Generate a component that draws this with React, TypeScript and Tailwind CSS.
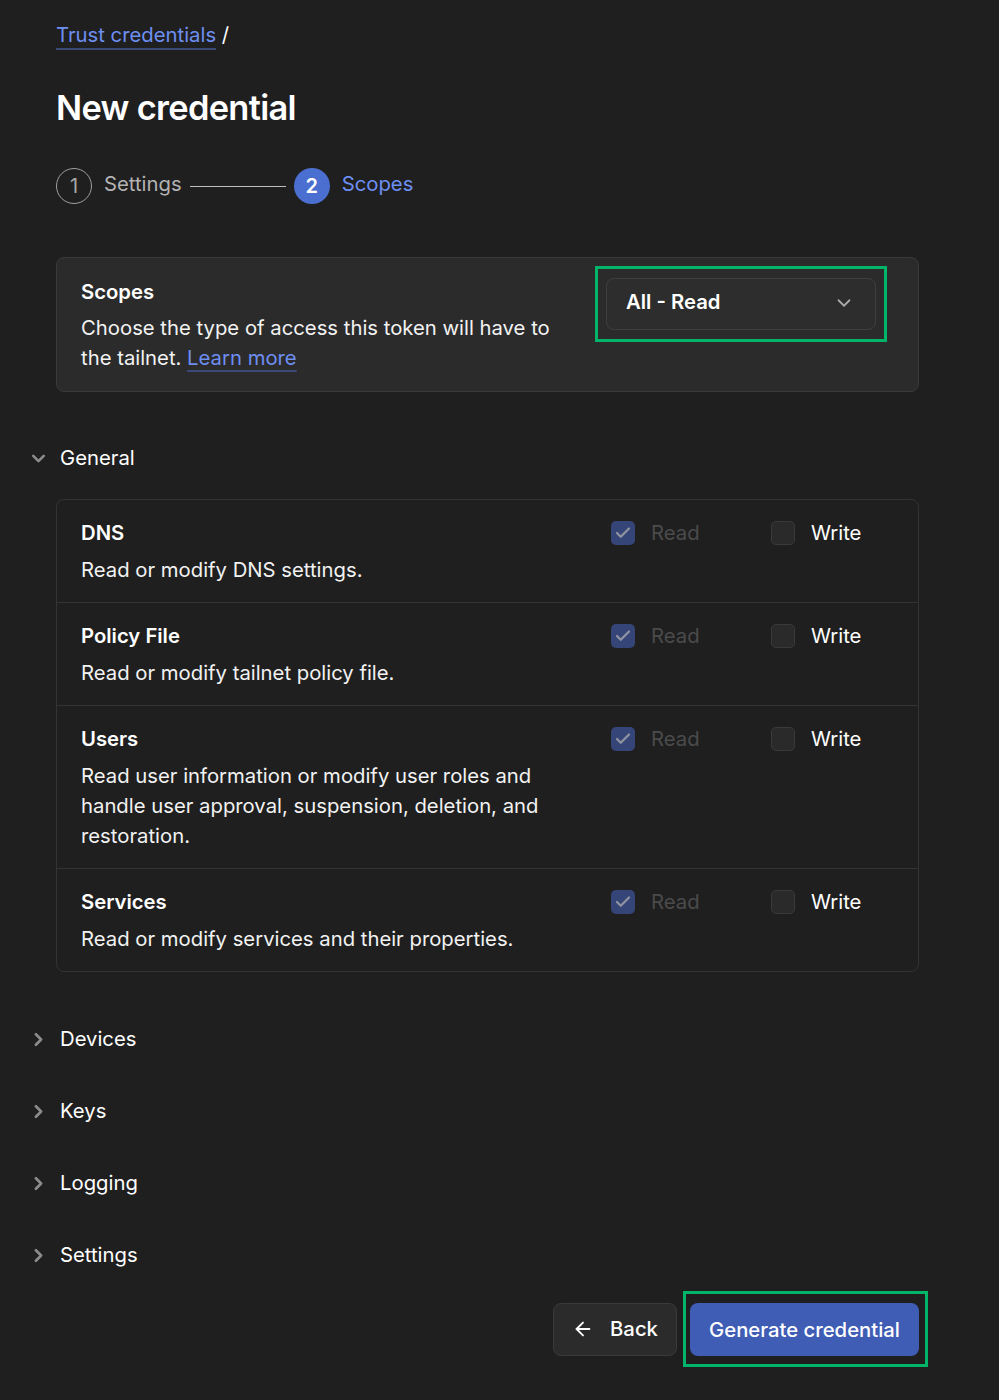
import { ArrowLeft, Check, ChevronDown, ChevronRight } from "lucide-react";

const scopes = [
  { title: "DNS", desc: "Read or modify DNS settings." },
  { title: "Policy File", desc: "Read or modify tailnet policy file." },
  {
    title: "Users",
    desc: "Read user information or modify user roles and handle user approval, suspension, deletion, and restoration.",
  },
  { title: "Services", desc: "Read or modify services and their properties." },
];

const collapsed = ["Devices", "Keys", "Logging", "Settings"];

function ScopeRow({ title, desc, last }: { title: string; desc: string; last?: boolean }) {
  return (
    <div className={`flex px-6 pt-[18px] pb-[17px] ${last ? "" : "border-b border-[#333333]"}`}>
      <div className="w-[470px]">
        <div className="font-semibold text-[20.3px] leading-[30px] text-white">{title}</div>
        <p className="mt-[7px] text-[20.3px] leading-[30px] text-[#f2f2f2]">{desc}</p>
      </div>
      <div className="ml-[60px] flex h-[30px] items-center">
        {/* Read - checked & disabled */}
        <div className="flex w-[160px] items-center gap-4">
          <span className="flex h-6 w-6 items-center justify-center rounded-[5px] bg-[#354577]">
            <Check size={18} strokeWidth={3} className="text-[#8f93a0]" />
          </span>
          <span className="text-[20.3px] text-[#4b4b4b]">Read</span>
        </div>
        {/* Write */}
        <div className="flex items-center gap-4">
          <span className="h-6 w-6 rounded-[5px] border border-[#3a3a3a] bg-[#2a2a2a]" />
          <span className="text-[20.3px] text-white">Write</span>
        </div>
      </div>
    </div>
  );
}

export default function App() {
  return (
    <div
      className="min-h-screen bg-[#1f1f1f] text-white"
      style={{ fontFamily: "Inter, 'Noto Sans', sans-serif" }}
    >
      <div className="w-[919px] pl-[56px] pt-[20px] pb-[32px]">
        {/* Breadcrumb */}
        <div className="text-[20.3px] leading-[30px]">
          <a className="text-[#6e8ff2] underline decoration-[#394a78] decoration-2 underline-offset-[6px]">
            Trust credentials
          </a>
          <span className="text-white"> /</span>
        </div>

        {/* Title */}
        <h1 className="mt-[36px] text-[34.4px] font-semibold tracking-[-0.02em] leading-[44px]">New credential</h1>

        {/* Stepper */}
        <div className="mt-[38px] flex items-center">
          <span className="flex h-9 w-9 items-center justify-center rounded-full border-[1.5px] border-[#a0a0a0] text-[20px] text-[#a8a8a8]">
            1
          </span>
          <span className="ml-3 text-[20.3px] text-[#b3b3b3] -mt-1">Settings</span>
          <span className="mx-[8px] h-px w-[96px] bg-[#bdbdbd]" />
          <span className="flex h-9 w-9 items-center justify-center rounded-full bg-[#4a6fd0] text-[20px] font-semibold text-white">
            2
          </span>
          <span className="ml-3 text-[20.3px] text-[#6e8ff2] -mt-1">Scopes</span>
        </div>

        {/* Scopes card */}
        <div className="mt-[53px] flex items-start justify-between rounded-lg border border-[#3a3a3a] bg-[#2b2b2b] pl-6 pr-[31px] pt-[19px] pb-[18px]">
          <div className="w-[480px]">
            <div className="text-[20.3px] font-semibold leading-[30px]">Scopes</div>
            <p className="mt-[6px] text-[20.3px] leading-[30px] text-[#f2f2f2]">
              Choose the type of access this token will have to the tailnet.{" "}
              <a className="text-[#6e8ff2] underline decoration-[#394a78] decoration-2 underline-offset-[5px]">
                Learn more
              </a>
            </p>
          </div>
          <div className="-mt-[11px] border-[3px] border-[#00b46a] px-2 py-[9px]">
            <div className="flex h-[52px] w-[270px] items-center justify-between rounded-lg border border-[#3f3f3f] bg-[#2d2d2d] pb-[3px] pl-[19px] pr-5">
              <span className="text-[20.3px] font-semibold text-white">All - Read</span>
              <ChevronDown size={22} strokeWidth={2} className="text-[#a8a8a8]" />
            </div>
          </div>
        </div>

        {/* General section */}
        <div className="mt-[51px] -ml-[28px] flex items-center gap-[11px]">
          <ChevronDown size={21} strokeWidth={3} className="text-[#8c8c8c]" />
          <span className="text-[20.3px] text-white">General</span>
        </div>

        <div className="mt-[26px] rounded-lg border border-[#333333]">
          {scopes.map((s, i) => (
            <ScopeRow key={s.title} title={s.title} desc={s.desc} last={i === scopes.length - 1} />
          ))}
        </div>

        {/* Collapsed sections */}
        <div className="mt-[52px] -ml-[28px] flex flex-col gap-[42px]">
          {collapsed.map((c) => (
            <div key={c} className="flex h-[30px] items-center gap-[11px]">
              <ChevronRight size={21} strokeWidth={3} className="text-[#8c8c8c]" />
              <span className="text-[20.3px] text-white">{c}</span>
            </div>
          ))}
        </div>

        {/* Footer buttons */}
        <div className="mt-[21px] -mr-[9px] flex items-center justify-end gap-[6px]">
          <button className="flex h-[53px] w-[124px] items-center justify-center gap-4 rounded-lg border border-[#3a3a3a] bg-[#2b2b2b] text-[20.3px] font-medium text-white">
            <ArrowLeft size={22} strokeWidth={2} />
            Back
          </button>
          <div className="border-[3px] border-[#00b46a] pl-1 pr-[6px] pt-[9px] pb-2">
            <button className="h-[53px] w-[229px] rounded-lg bg-[#3f5db5] text-[20.3px] font-medium text-white">
              Generate credential
            </button>
          </div>
        </div>
      </div>
    </div>
  );
}
